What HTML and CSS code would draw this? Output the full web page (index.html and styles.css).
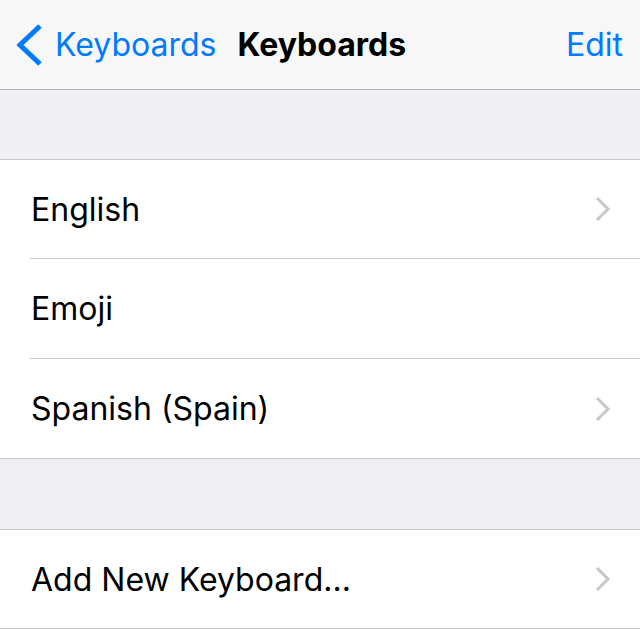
FILE: index.html
```html
<!DOCTYPE html>
<html>
<head>
<meta charset="utf-8">
<link rel="stylesheet" href="styles.css">
</head>
<body>
<div class="nav">
  <div class="back">
    <svg class="back-icon" width="28" height="44" viewBox="0 0 28 44"><path d="M25 3 L5 22 L25 41" fill="none" stroke="#007aff" stroke-width="5"/></svg>
    <span>Keyboards</span>
  </div>
  <div class="title">Keyboards</div>
  <div class="edit">Edit</div>
</div>
<div class="gap"></div>
<div class="group">
  <div class="row"><span>English</span><svg class="chev" width="16" height="26" viewBox="0 0 16 26"><path d="M2 2 L13 13 L2 24" fill="none" stroke="#c7c7cc" stroke-width="3"/></svg></div>
  <div class="row"><span>Emoji</span></div>
  <div class="row"><span>Spanish (Spain)</span><svg class="chev" width="16" height="26" viewBox="0 0 16 26"><path d="M2 2 L13 13 L2 24" fill="none" stroke="#c7c7cc" stroke-width="3"/></svg></div>
</div>
<div class="gap gap-second"></div>
<div class="group">
  <div class="row"><span>Add New Keyboard...</span><svg class="chev" width="16" height="26" viewBox="0 0 16 26"><path d="M2 2 L13 13 L2 24" fill="none" stroke="#c7c7cc" stroke-width="3"/></svg></div>
</div>
</body>
</html>
```
FILE: styles.css
```css
html, body { margin: 0; padding: 0; }
body {
  background: #efeff4;
  font-family: "Inter", "Roboto", sans-serif;
  width: 640px;
  height: 629px;
  overflow: hidden;
}
.nav {
  height: 89px;
  background: #f7f7f8;
  border-bottom: 1px solid #b2b2b2;
  display: flex;
  align-items: center;
}
.back {
  display: flex;
  align-items: center;
  color: #007aff;
  font-size: 32px;
  padding-left: 15px;
}
.back-icon { margin-right: 12px; }
.title {
  font-weight: 700;
  font-size: 32px;
  color: #000;
  margin-left: 21px;
}
.edit {
  margin-left: auto;
  margin-right: 17px;
  color: #007aff;
  font-size: 32px;
}
.gap { height: 69px; border-bottom: 1px solid #c8c7cc; }
.gap-second { height: 70px; }
.group { background: #fff; border-bottom: 1px solid #c8c7cc; }
.row {
  height: 99px;
  margin-left: 30px;
  padding-right: 29px;
  display: flex;
  align-items: center;
  justify-content: space-between;
  font-size: 32px;
  color: #000;
  border-bottom: 1px solid #c8c7cc;
}
.row:first-child { height: 98px; }
.row span { margin-left: 1px; }
.row:last-child { border-bottom: none; }
.chev { display: block; }
```
